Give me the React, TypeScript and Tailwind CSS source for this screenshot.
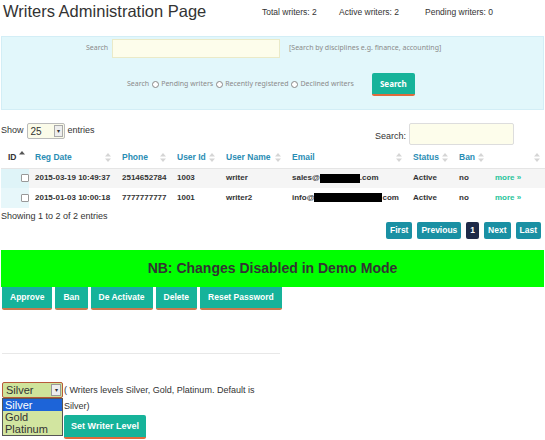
import React from "react";

const SortIcon = ({ up }: { up?: boolean }) => (
  <svg width="6" height="9" viewBox="0 0 6 9" className="inline-block">
    <path d="M3 0 L6 3.5 H0 Z" fill={up ? "#555" : "#d5d5d5"} />
    {!up && <path d="M3 9 L6 5.5 H0 Z" fill="#d5d5d5" />}
  </svg>
);

const Redacted = ({ w }: { w: number }) => (
  <span className="inline-block bg-black align-middle" style={{ width: w, height: 9 }} />
);

export default function App() {
  const teal = "bg-[#16b39a] text-white";
  const headers = [
    { t: "ID", w: 28 },
    { t: "Reg Date", w: 87 },
    { t: "Phone", w: 55 },
    { t: "User Id", w: 49 },
    { t: "User Name", w: 66 },
    { t: "Email", w: 121 },
    { t: "Status", w: 46 },
    { t: "Ban", w: 36 },
    { t: "", w: 56 },
  ];
  return (
    <div className="w-[545px] h-[440px] overflow-hidden bg-white text-[#333] font-['Liberation_Sans',Arial,sans-serif] relative">
      {/* header */}
      <div className="flex items-start h-[36px]">
        <div className="pl-[3px] pt-[0px] text-[16.5px] leading-[22px] text-[#333] w-[262px] whitespace-nowrap">Writers Administration Page</div>
        <div className="pt-[6px] text-[8.5px] flex whitespace-nowrap">
          <span className="w-[77px]">Total writers: 2</span>
          <span className="w-[86px]">Active writers: 2</span>
          <span>Pending writers: 0</span>
        </div>
      </div>
      {/* search panel */}
      <div className="mx-[1px] h-[74px] bg-[#e2f7fb] border border-[#d3eef6] font-['Noto_Sans',sans-serif] text-[#8a8a8a] text-[7px] whitespace-nowrap">
        <div className="flex items-center pt-[2px]">
          <span className="ml-[84px] w-[26px]">Search</span>
          <div className="w-[168px] h-[19px] bg-[#fdfdeb] border border-[#eaeac8]" />
          <span className="ml-[9px]">[Search by disciplines e.g. finance, accounting]</span>
        </div>
        <div className="flex items-center mt-[15px]">
          <span className="ml-[125px]">Search</span>
          <span className="ml-[3px] inline-block w-[7px] h-[7px] rounded-full border border-[#888] bg-white" />
          <span className="ml-[2px]">Pending writers</span>
          <span className="ml-[3px] inline-block w-[7px] h-[7px] rounded-full border border-[#888] bg-white" />
          <span className="ml-[2px]">Recently registered</span>
          <span className="ml-[3px] inline-block w-[7px] h-[7px] rounded-full border border-[#888] bg-white" />
          <span className="ml-[2px]">Declined writers</span>
          <button className={`ml-[18px] w-[43px] h-[23px] rounded-[2px] ${teal} font-bold text-[8px] border-b-[2px] border-[#e06a3c]`}>Search</button>
        </div>
      </div>
      {/* show / search */}
      <div className="flex items-start mt-[13px] h-[24px] text-[9px]">
        <div className="flex items-center ml-[1px]">
          <span>Show</span>
          <div className="ml-[3px] w-[38px] h-[16px] bg-[#fbfbe9] border border-[#bbb] rounded-[2px] flex items-center text-[10px] pl-[3px] relative">
            25
            <span className="absolute right-[1px] top-[1px] w-[9px] h-[12px] bg-[#eee] border border-[#aaa] flex items-center justify-center text-[6px]">▾</span>
          </div>
          <span className="ml-[3px]">entries</span>
        </div>
        <div className="ml-auto mr-[31px] flex items-center mt-[6px]">
          <span className="mr-[3px]">Search:</span>
          <div className="w-[105px] h-[22px] -mt-[6px] bg-[#fdfdeb] border border-[#ddd] rounded-[2px]" />
        </div>
      </div>
      {/* table */}
      <table className="border-collapse text-[8px] font-bold table-fixed ml-[1px]" style={{ width: 544 }}>
        <colgroup>
          {headers.map((h, i) => (
            <col key={i} style={{ width: h.w }} />
          ))}
        </colgroup>
        <thead>
          <tr className="h-[21px]">
            {headers.map((h, i) => (
              <th key={i} className={`text-left align-middle font-bold text-[8.5px] whitespace-nowrap ${i === 0 ? "text-[#333] pl-[7px]" : "text-[#2a8db4] pl-[6px]"}`}>
                <div className="flex items-center pr-[5px]">
                  <span>{h.t}</span>
                  {i === 0 ? <span className="ml-[2px] -mt-[4px]"><SortIcon up /></span> : <span className="ml-auto"><SortIcon /></span>}
                </div>
              </th>
            ))}
          </tr>
        </thead>
        <tbody>
          {[
            ["2015-03-19 10:49:37", "2514652784", "1003", "writer", "sales@", 40, ".com"],
            ["2015-01-03 10:00:18", "7777777777", "1001", "writer2", "info@", 68, "com"],
          ].map((r, i) => (
            <tr key={i} className={`h-[20px] ${i === 0 ? "bg-[#f5f5f5] border-t border-[#e5e5e5]" : "bg-white"}`}>
              <td className={`${i === 0 ? "bg-[#dff4f8]" : "bg-[#e7f7fa]"} pl-[20px]`}>
                <span className="inline-block w-[8px] h-[8px] border border-[#999] rounded-[1px] bg-white align-middle" />
              </td>
              <td className="pl-[6px] whitespace-nowrap">{r[0]}</td>
              <td className="pl-[6px]">{r[1]}</td>
              <td className="pl-[6px]">{r[2]}</td>
              <td className="pl-[6px]">{r[3]}</td>
              <td className="pl-[6px] whitespace-nowrap">
                {r[4]}
                <Redacted w={r[5] as number} />
                {r[6]}
              </td>
              <td className="pl-[6px]">Active</td>
              <td className="pl-[6px]">no</td>
              <td className="pl-[6px] text-[#27c49a] whitespace-nowrap">more »</td>
            </tr>
          ))}
        </tbody>
      </table>
      <div className="flex items-start h-[33px] text-[9px]">
        <div className="ml-[1px] mt-[2px]">Showing 1 to 2 of 2 entries</div>
        <div className="ml-auto mr-[4px] mt-[14px] flex gap-[5px] text-[8.5px] font-bold">
          <span className="h-[17px] px-[4px] flex items-center rounded-[2px] bg-[#1a90a3] text-white">First</span>
          <span className="h-[17px] px-[4px] flex items-center rounded-[2px] bg-[#1a90a3] text-white">Previous</span>
          <span className="h-[17px] px-[4px] flex items-center rounded-[2px] bg-[#1e2a48] text-white">1</span>
          <span className="h-[17px] px-[4px] flex items-center rounded-[2px] bg-[#1a90a3] text-white">Next</span>
          <span className="h-[17px] px-[4px] flex items-center rounded-[2px] bg-[#1a90a3] text-white">Last</span>
        </div>
      </div>
      {/* banner */}
      <div className="mt-[9px] mx-[1px] h-[37px] bg-[#00ff00] flex items-center justify-center font-bold text-[14px] text-[#333]">
        NB: Changes Disabled in Demo Mode
      </div>
      <div className="flex gap-[3px] ml-[2px] text-[8.5px]">
        {["Approve", "Ban", "De Activate", "Delete", "Reset Password"].map((b) => (
          <span key={b} className={`h-[23px] px-[8px] flex items-center rounded-b-[2px] ${teal} font-bold border-b-[2px] border-[#c87a4e] whitespace-nowrap`}>
            {b}
          </span>
        ))}
      </div>
      <div className="mt-[43px] ml-[2px] w-[278px] h-[1px] bg-[#e8e8e8]" />
      {/* level */}
      <div className="mt-[28px] ml-[2px] flex text-[9px] relative">
        <div className="relative w-[61px]">
          <div className="w-[61px] h-[16px] bg-[#cfe39a] border border-[#b85a3a] rounded-[2px] flex items-center pl-[3px] text-[11px] relative">
            Silver
            <span className="absolute right-[1px] top-[1px] w-[10px] h-[12px] bg-[#eee] border border-[#999] flex items-center justify-center text-[6px]">▾</span>
          </div>
          <div className="absolute left-0 top-[16px] w-[61px] bg-[#d2e5a0] border border-[#555] text-[11px] leading-[12px] z-10">
            <div className="bg-[#1d64d8] text-white pl-[2px]">Silver</div>
            <div className="pl-[2px]">Gold</div>
            <div className="pl-[2px]">Platinum</div>
          </div>
        </div>
        <div className="ml-[1px] mt-[0px] w-[220px] leading-[16px] whitespace-nowrap">
          ( Writers levels Silver, Gold, Platinum. Default is
          <br />
          Silver)
          <div className="mt-[1px] w-[82px] h-[24px] rounded-[2px] bg-[#16b39a] text-white font-bold text-[9px] flex items-center justify-center border-b-[2px] border-[#e06a3c]">
            Set Writer Level
          </div>
        </div>
      </div>
    </div>
  );
}
